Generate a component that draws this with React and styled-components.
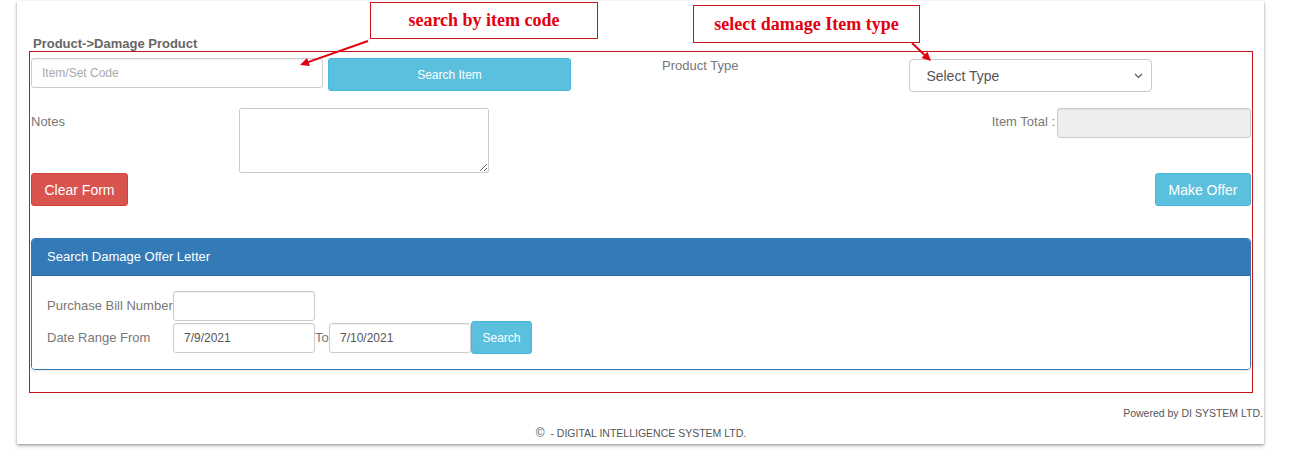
import React from 'react';
import styled, { createGlobalStyle } from 'styled-components';

const GlobalStyle = createGlobalStyle`
  html, body {
    margin: 0;
    padding: 0;
    background: #ffffff;
  }
  body {
    font-family: "Liberation Sans", Arial, sans-serif;
    color: #666666;
  }
  * {
    box-sizing: border-box;
  }
`;

const Page = styled.div`
  min-height: 100vh;
  padding: 1px 38px 20px 17px;
`;

const Card = styled.div`
  position: relative;
  width: 1247px;
  background: #ffffff;
  padding: 35px 11px 4px 12px;
  box-shadow: 0 1px 2px rgba(0, 0, 0, 0.25), 0 2px 4px rgba(0, 0, 0, 0.22);
`;

const Breadcrumb = styled.div`
  font-size: 13px;
  line-height: 15px;
  font-weight: bold;
  color: #666666;
  padding-left: 4px;
`;

const Outlined = styled.div`
  border: 1px solid #c9141c;
  padding: 6px 1px 22px 1px;
`;

const Row = styled.div`
  display: flex;
  align-items: flex-start;
  margin-top: ${p => p.$top || 0}px;
`;

const Label = styled.div`
  font-size: 13px;
  line-height: 16px;
  color: #777777;
  width: ${p => (p.$w ? `${p.$w}px` : 'auto')};
  margin-top: ${p => p.$top || 0}px;
  margin-left: ${p => p.$left || 0}px;
  text-align: ${p => p.$align || 'left'};
  white-space: nowrap;
`;

const Spacer = styled.div`
  flex: 1;
`;

const TextInput = styled.input`
  display: block;
  width: ${p => p.$w}px;
  height: ${p => p.$h || 30}px;
  margin-top: ${p => p.$top || 0}px;
  margin-left: ${p => p.$left || 0}px;
  padding: 0 10px;
  font-family: "Liberation Sans", Arial, sans-serif;
  font-size: 12px;
  color: #555555;
  background: ${p => (p.$readonly ? '#eeeeee' : '#ffffff')};
  border: 1px solid #cccccc;
  border-radius: 3px;
  box-shadow: inset 0 1px 1px rgba(0, 0, 0, 0.06);
  outline: none;

  &::placeholder {
    color: #aaaaaa;
  }
`;

const Notes = styled.textarea`
  display: block;
  width: 250px;
  height: 65px;
  border: 1px solid #cccccc;
  border-radius: 2px;
  resize: both;
  outline: none;
  font-family: "Liberation Sans", Arial, sans-serif;
`;

const SelectWrap = styled.div`
  position: relative;
  margin-top: 1px;
  margin-left: ${p => p.$left || 0}px;
`;

const Select = styled.select`
  display: block;
  width: 243px;
  height: 33px;
  padding: 0 24px 0 16px;
  font-family: "Liberation Sans", Arial, sans-serif;
  font-size: 14px;
  color: #555555;
  background: #ffffff;
  border: 1px solid #cccccc;
  border-radius: 4px;
  outline: none;
  appearance: none;
  -webkit-appearance: none;
`;

const Caret = styled.svg`
  position: absolute;
  right: 9px;
  top: 14px;
  pointer-events: none;
`;

const tones = {
  info: { bg: '#5bc0de', border: '#46b8da' },
  danger: { bg: '#d9534f', border: '#d43f3a' },
};

const Button = styled.button`
  display: block;
  width: ${p => p.$w}px;
  height: 33px;
  margin-left: ${p => p.$left || 0}px;
  padding: 0;
  font-family: "Liberation Sans", Arial, sans-serif;
  font-size: ${p => p.$size || 14}px;
  color: #ffffff;
  background: ${p => tones[p.$tone].bg};
  border: 1px solid ${p => tones[p.$tone].border};
  border-radius: 3px;
  cursor: pointer;
`;

const Panel = styled.div`
  margin-top: 32px;
  border: 1px solid #337ab7;
  border-radius: 4px;
  box-shadow: 0 1px 2px rgba(0, 0, 0, 0.1);
  overflow: hidden;
`;

const PanelHeading = styled.div`
  height: 36px;
  background: #337ab7;
  color: #ffffff;
  font-size: 13px;
  line-height: 35px;
  padding-left: 15px;
`;

const PanelBody = styled.div`
  padding: 15px 15px 15px 15px;
  background: #ffffff;
  border-top: 1px solid #2e6da4;
`;

const BodyRow = styled.div`
  display: flex;
  align-items: center;
  margin-top: ${p => p.$top || 0}px;
`;

const Footer = styled.div`
  margin-top: 13px;
  font-size: 10.5px;
  line-height: 14px;
  color: #555555;
`;

const Powered = styled.div`
  text-align: right;
  margin-right: -10px;
`;

const Copyright = styled.div`
  text-align: center;
  margin-top: 6px;
`;

const CopySign = styled.span`
  font-size: 12px;
`;

const Callout = styled.div`
  position: absolute;
  left: ${p => p.$x}px;
  top: ${p => p.$y}px;
  width: ${p => p.$w}px;
  height: ${p => p.$h}px;
  border: 1px solid #c9141c;
  background: #ffffff;
  color: #e3000f;
  font-family: "Liberation Serif", "Times New Roman", serif;
  font-weight: bold;
  font-size: 18px;
  line-height: ${p => p.$h - 2}px;
  text-align: center;
`;

const Arrows = styled.svg`
  position: absolute;
  left: 0;
  top: 0;
  pointer-events: none;
`;

function Arrow({ x1, y1, x2, y2 }) {
  const a = Math.atan2(y2 - y1, x2 - x1);
  const len = 10;
  const spread = 0.45;
  const p1 = [x2 - len * Math.cos(a - spread), y2 - len * Math.sin(a - spread)];
  const p2 = [x2 - len * Math.cos(a + spread), y2 - len * Math.sin(a + spread)];
  const bx = x2 - 7 * Math.cos(a);
  const by = y2 - 7 * Math.sin(a);
  return (
    <g>
      <line x1={x1} y1={y1} x2={bx} y2={by} stroke="#e3000f" strokeWidth="2" />
      <polygon points={`${x2},${y2} ${p1[0]},${p1[1]} ${p2[0]},${p2[1]}`} fill="#e3000f" />
    </g>
  );
}

export default function App() {
  return (
    <>
      <GlobalStyle />
      <Page>
        <Card>
          <Breadcrumb>Product-&gt;Damage Product</Breadcrumb>
          <Outlined>
            <Row>
              <TextInput $w={292} placeholder="Item/Set Code" />
              <Button $tone="info" $w={243} $left={5} $size={12}>Search Item</Button>
              <Label $left={91} $top={0}>Product Type</Label>
              <SelectWrap $left={171}>
                <Select defaultValue="">
                  <option value="">Select Type</option>
                </Select>
                <Caret width="9" height="6" viewBox="0 0 9 6">
                  <path d="M1 1 L4.5 4.5 L8 1" fill="none" stroke="#555" strokeWidth="1.2" />
                </Caret>
              </SelectWrap>
            </Row>
            <Row $top={16}>
              <Label $w={208} $top={6}>Notes</Label>
              <Notes />
              <Spacer />
              <Label $top={6} $align="right">Item Total :</Label>
              <TextInput $w={194} $h={30} $left={2} $readonly readOnly />
            </Row>
            <Row $top={0}>
              <Button $tone="danger" $w={97}>Clear Form</Button>
              <Spacer />
              <Button $tone="info" $w={96}>Make Offer</Button>
            </Row>
            <Panel>
              <PanelHeading>Search Damage Offer Letter</PanelHeading>
              <PanelBody>
                <BodyRow>
                  <Label $w={126}>Purchase Bill Number</Label>
                  <TextInput $w={142} />
                </BodyRow>
                <BodyRow $top={0}>
                  <Label $w={126}>Date Range From</Label>
                  <TextInput $w={142} defaultValue="7/9/2021" />
                  <Label $w={14}>To</Label>
                  <TextInput $w={142} defaultValue="7/10/2021" />
                  <Button $tone="info" $w={61} $size={12}>Search</Button>
                </BodyRow>
              </PanelBody>
            </Panel>
          </Outlined>
          <Footer>
            <Powered>Powered by DI SYSTEM LTD.</Powered>
            <Copyright><CopySign>&copy;</CopySign>&nbsp; - DIGITAL INTELLIGENCE SYSTEM LTD.</Copyright>
          </Footer>

          <Callout $x={353} $y={1} $w={228} $h={37}>search by item code</Callout>
          <Callout $x={676} $y={4} $w={227} $h={38}>select damage Item type</Callout>
          <Arrows width="1247" height="100" viewBox="0 0 1247 100">
            <Arrow x1={351} y1={40} x2={283} y2={64} />
            <Arrow x1={895} y1={42} x2={914} y2={60} />
          </Arrows>
        </Card>
      </Page>
    </>
  );
}
